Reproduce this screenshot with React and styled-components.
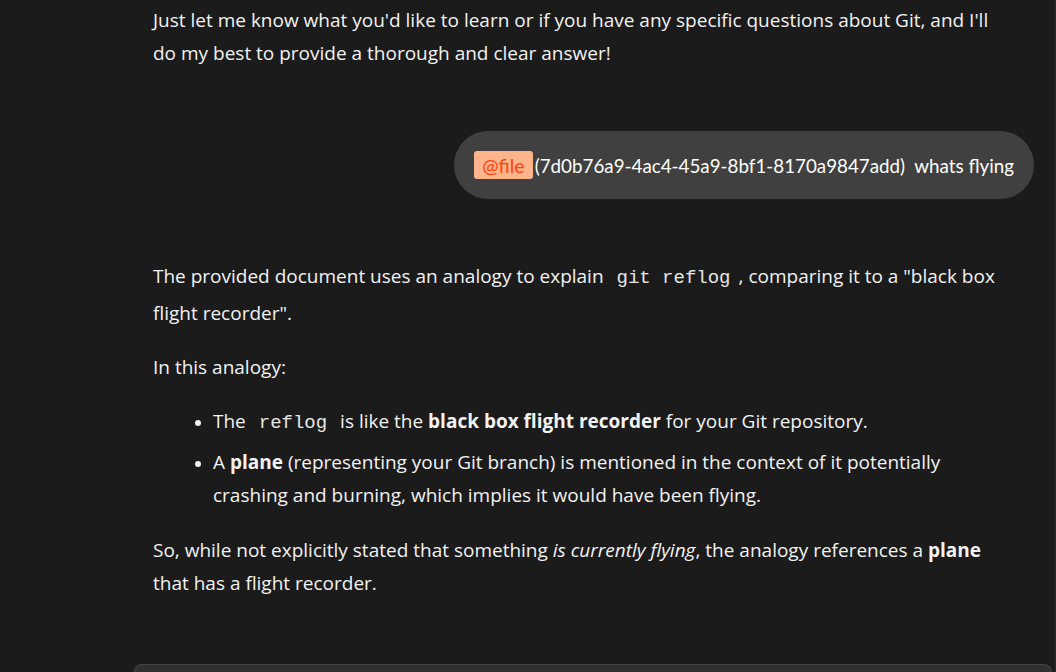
import React from 'react';
import styled, { createGlobalStyle } from 'styled-components';

const Global = createGlobalStyle`
  html, body { margin: 0; padding: 0; background: #1b1b1b; }
  body { width: 1056px; height: 672px; overflow: hidden; }
`;

const Page = styled.div`
  display: flex;
  height: 672px;
  background: #1b1b1b;
`;

const Main = styled.div`
  flex: 1;
  display: flex;
  flex-direction: column;
  overflow: hidden;
`;

const Track = styled.div`
  width: 2px;
  background: #262626;
`;

const Thread = styled.div`
  flex: 1;
  width: 881px;
  margin-left: 153px;
  margin-top: 4px;
  color: #f2f2f2;
  font-family: "Open Sans", "Noto Sans", sans-serif;
  font-size: 19px;
  line-height: 33px;
`;

const P = styled.p`
  margin: 0 0 ${p => p.$mb ?? 21}px;
  padding-right: 24px;
  line-height: ${p => p.$lh || 33}px;
`;

const UserRow = styled.div`
  display: flex;
  justify-content: flex-end;
  margin: 61px 0 59px;
`;

const Bubble = styled.div`
  display: flex;
  align-items: center;
  height: 68px;
  padding: 0 20px;
  border-radius: 34px;
  background: #404040;
  color: #fff;
  font-family: "Lato", "Inter", sans-serif;
  font-size: 18.8px;
  white-space: pre;
`;

const Chip = styled.span`
  display: inline-flex;
  align-items: center;
  height: 28px;
  padding: 0 8px;
  margin-right: 2px;
  border-radius: 3px;
  background: #ffb48b;
  color: #ff4510;
  font-size: 19.5px;
`;

const Code = styled.code`
  font-family: "Liberation Mono", "DejaVu Sans Mono", monospace;
  font-size: 19px;
  line-height: 1;
  margin: 0 8px;
  color: #e6e6e6;
`;

const List = styled.ul`
  margin: 0 0 22px;
  padding-left: 60px;
  li { margin: 0 0 8px; padding-right: 24px; }
  li:last-child { margin-bottom: 0; }
  li::marker { font-size: 16px; }
`;

const Composer = styled.div`
  height: 7px;
  margin: 0 2px 0 134px;
  border: 1px solid #444;
  border-bottom: none;
  border-radius: 14px 14px 0 0;
  background: #303030;
`;

const App = () => {
  return (
    <>
      <Global />
      <Page>
        <Main>
          <Thread>
            <P>
              Just let me know what you'd like to learn or if you have any specific questions about Git, and I'll do my best to provide a thorough and clear answer!
            </P>
            <UserRow>
              <Bubble>
                <Chip>@file</Chip>(7d0b76a9-4ac4-45a9-8bf1-8170a9847add)  whats flying
              </Bubble>
            </UserRow>
            <P $lh={37} $mb={19}>
              The provided document uses an analogy to explain <Code>git reflog</Code>, comparing it to a "black box flight recorder".
            </P>
            <P>In this analogy:</P>
            <List>
              <li>The <Code>reflog</Code> is like the <b>black box flight recorder</b> for your Git repository.</li>
              <li>A <b>plane</b> (representing your Git branch) is mentioned in the context of it potentially crashing and burning, which implies it would have been flying.</li>
            </List>
            <P>
              So, while not explicitly stated that something <i>is currently flying</i>, the analogy references a <b>plane</b> that has a flight recorder.
            </P>
          </Thread>
          <Composer />
        </Main>
        <Track />
      </Page>
    </>
  );
};

export default App;
